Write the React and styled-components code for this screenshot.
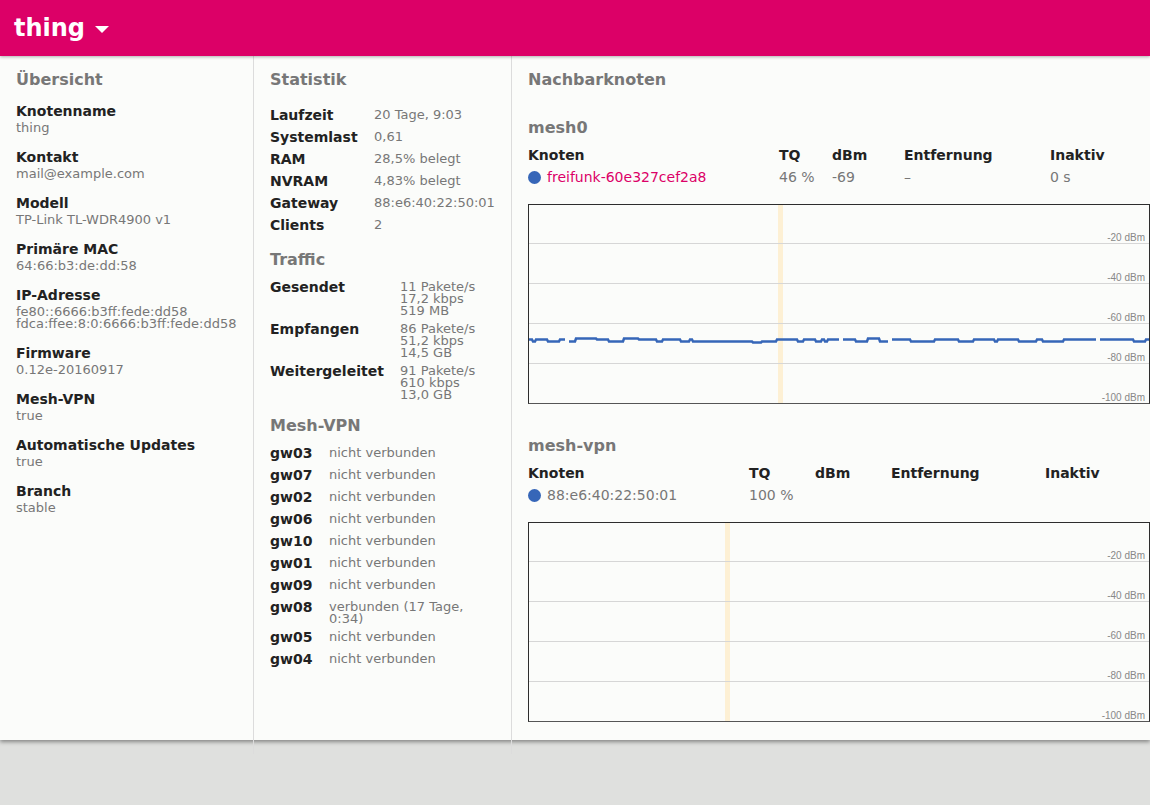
import React from 'react';
import styled, { createGlobalStyle } from 'styled-components';

const GlobalStyle = createGlobalStyle`
  html, body {
    margin: 0;
    padding: 0;
    background: #dfe0de;
    font-family: "DejaVu Sans", "Noto Sans", sans-serif;
  }
`;

const Page = styled.div`
  width: 1150px;
  min-height: 805px;
`;

const Header = styled.header`
  position: relative;
  z-index: 2;
  display: flex;
  align-items: center;
  height: 56px;
  padding: 0 14px;
  box-sizing: border-box;
  background: #dc0067;
  box-shadow: 0 1px 3px rgba(0, 0, 0, 0.3);
  color: #fff;
`;

const NodeName = styled.h1`
  margin: 0;
  font-size: 24px;
  font-weight: bold;
  line-height: 28px;
`;

const Caret = styled.span`
  width: 0;
  height: 0;
  margin-left: 10px;
  margin-top: 2px;
  border-left: 7px solid transparent;
  border-right: 7px solid transparent;
  border-top: 7px solid #fff;
`;

const Main = styled.main`
  display: grid;
  grid-template-columns: 254px 258px 1fr;
  height: 684px;
  background: #fbfcfa;
  box-shadow: 0 2px 4px rgba(0, 0, 0, 0.4);
`;

const Column = styled.section`
  padding: 14px ${p => (p.$flush ? '0' : '16px')} 0 16px;
  border-right: ${p => (p.$last ? 'none' : '1px solid #dcdcdc')};
  min-width: 0;
`;

const H2 = styled.h2`
  margin: 0 0 15px;
  font-size: 16px;
  line-height: 19px;
  color: #777;
`;

const H3 = styled.h3`
  margin: 14px 0 7px;
  font-size: 16px;
  line-height: 19px;
  color: #777;
`;

const Item = styled.div`
  margin-top: ${p => (p.$first ? '-2px' : '0')};
  margin-bottom: 14px;
`;

const Label = styled.div`
  font-size: 14px;
  font-weight: bold;
  line-height: 18px;
  color: #222;
`;

const Value = styled.div`
  margin-top: 2px;
  font-size: 13px;
  line-height: 12px;
  color: #777;
`;

const Table = styled.div`
  display: grid;
  grid-template-columns: ${p => p.$cols};
`;

const Cell = styled.div`
  padding: 2px 0;
  font-size: 14px;
  font-weight: bold;
  line-height: 18px;
  color: #222;
`;

const CellValue = styled.div`
  padding: 5px 0 2px;
  margin-bottom: -1px;
  font-size: 13px;
  line-height: 12px;
  color: #777;
  white-space: pre-line;
`;

const Section = styled.div`
  margin-top: ${p => (p.$first ? '29px' : '0')};
`;

const NeighbourName = styled.div`
  display: flex;
  align-items: center;
  gap: 6px;
  padding: 2px 0;
  font-size: 14px;
  line-height: 18px;
  color: ${p => (p.$link ? '#dc0067' : '#777')};
`;

const Dot = styled.span`
  width: 13px;
  height: 13px;
  border-radius: 50%;
  background: #3666b8;
`;

const NeighbourValue = styled.div`
  padding: 2px 0;
  font-size: 14px;
  line-height: 18px;
  color: #777;
`;

const ChartBox = styled.div`
  margin: 16px 0 32px;
  height: 198px;
  border: 1px solid #2d2d2d;
  border-bottom-color: #555;
  svg {
    display: block;
  }
`;

const overview = [
  ['Knotenname', ['thing']],
  ['Kontakt', ['mail@example.com']],
  ['Modell', ['TP-Link TL-WDR4900 v1']],
  ['Primäre MAC', ['64:66:b3:de:dd:58']],
  ['IP-Adresse', ['fe80::6666:b3ff:fede:dd58', 'fdca:ffee:8:0:6666:b3ff:fede:dd58']],
  ['Firmware', ['0.12e-20160917']],
  ['Mesh-VPN', ['true']],
  ['Automatische Updates', ['true']],
  ['Branch', ['stable']],
];

const stats = [
  ['Laufzeit', '20 Tage, 9:03'],
  ['Systemlast', '0,61'],
  ['RAM', '28,5% belegt'],
  ['NVRAM', '4,83% belegt'],
  ['Gateway', '88:e6:40:22:50:01'],
  ['Clients', '2'],
];

const traffic = [
  ['Gesendet', '11 Pakete/s\n17,2 kbps\n519 MB'],
  ['Empfangen', '86 Pakete/s\n51,2 kbps\n14,5 GB'],
  ['Weitergeleitet', '91 Pakete/s\n610 kbps\n13,0 GB'],
];

const vpn = [
  ['gw03', 'nicht verbunden'],
  ['gw07', 'nicht verbunden'],
  ['gw02', 'nicht verbunden'],
  ['gw06', 'nicht verbunden'],
  ['gw10', 'nicht verbunden'],
  ['gw01', 'nicht verbunden'],
  ['gw09', 'nicht verbunden'],
  ['gw08', 'verbunden (17 Tage,\n0:34)'],
  ['gw05', 'nicht verbunden'],
  ['gw04', 'nicht verbunden'],
];

const CHART_W = 620;
const y = dbm => -1.5 + -dbm * 2;

// step-like signal trace, small jitter around -69 dBm, a few missing samples
const signalPath = seed => {
  let s = seed;
  const rnd = () => (s = (s * 16807) % 2147483647) / 2147483647;
  let d = '';
  let x = 0;
  let open = false;
  while (x < CHART_W) {
    const len = 3 * (1 + Math.floor(rnd() * 5));
    const r = rnd();
    let off = 0;
    if (r < 0.35) off = 2;
    else if (r < 0.42) off = 3;
    else if (r > 0.9) off = -1;
    if (rnd() < 0.05) {
      open = false;
      x += 4;
      continue;
    }
    const end = Math.min(x + len, CHART_W);
    const py = y(-69) - 2 + off;
    d += open ? `L${x + 1} ${py}` : `M${x} ${py}`;
    d += `H${end}`;
    open = true;
    x = end;
  }
  return d;
};

const Chart = ({ marker, signal }) => (
  <ChartBox>
    <svg width="100%" height="198">
      <rect x={marker} y="0" width="5" height="198" fill="#fdf0d4" />
      {[-20, -40, -60, -80, -100].map(v => (
        <g key={v}>
          {v !== -100 && (
            <line x1="0" x2="100%" y1={y(v)} y2={y(v)} stroke="#d6d6d6" strokeWidth="1" />
          )}
          <text
            x="100%"
            dx="-4"
            y={y(v) - 3}
            textAnchor="end"
            fontSize="10"
            fontFamily="'Liberation Sans', Arial, sans-serif"
            fill="#888"
          >
            {v} dBm
          </text>
        </g>
      ))}
      {signal && (
        <path d={signalPath(signal)} fill="none" stroke="#3666b8" strokeWidth="2.5" />
      )}
    </svg>
  </ChartBox>
);

const NeighbourTable = ({ cols, name, link, tq, dbm, distance, inactive }) => (
  <Table $cols={cols}>
    <Cell>Knoten</Cell>
    <Cell>TQ</Cell>
    <Cell>dBm</Cell>
    <Cell>Entfernung</Cell>
    <Cell>Inaktiv</Cell>
    <NeighbourName $link={link}>
      <Dot />
      {name}
    </NeighbourName>
    <NeighbourValue>{tq}</NeighbourValue>
    <NeighbourValue>{dbm}</NeighbourValue>
    <NeighbourValue>{distance}</NeighbourValue>
    <NeighbourValue>{inactive}</NeighbourValue>
  </Table>
);

const App = () => (
  <Page>
    <GlobalStyle />
    <Header>
      <NodeName>thing</NodeName>
      <Caret />
    </Header>
    <Main>
      <Column>
        <H2>Übersicht</H2>
        {overview.map(([label, values], i) => (
          <Item key={label} $first={i === 0}>
            <Label>{label}</Label>
            <Value>
              {values.map(v => (
                <div key={v}>{v}</div>
              ))}
            </Value>
          </Item>
        ))}
      </Column>

      <Column>
        <H2>Statistik</H2>
        <Table $cols="104px 1fr">
          {stats.map(([k, v]) => (
            <React.Fragment key={k}>
              <Cell>{k}</Cell>
              <CellValue>{v}</CellValue>
            </React.Fragment>
          ))}
        </Table>
        <H3>Traffic</H3>
        <Table $cols="130px 1fr">
          {traffic.map(([k, v]) => (
            <React.Fragment key={k}>
              <Cell>{k}</Cell>
              <CellValue>{v}</CellValue>
            </React.Fragment>
          ))}
        </Table>
        <H3>Mesh-VPN</H3>
        <Table $cols="59px 1fr">
          {vpn.map(([k, v]) => (
            <React.Fragment key={k}>
              <Cell>{k}</Cell>
              <CellValue>{v}</CellValue>
            </React.Fragment>
          ))}
        </Table>
      </Column>

      <Column $last $flush>
        <H2>Nachbarknoten</H2>
        <Section $first>
          <H3>mesh0</H3>
          <NeighbourTable
            cols="251px 53px 72px 146px 1fr"
            name="freifunk-60e327cef2a8"
            link
            tq="46 %"
            dbm="-69"
            distance="–"
            inactive="0 s"
          />
          <Chart marker={249} signal={12345} />
        </Section>
        <Section>
          <H3>mesh-vpn</H3>
          <NeighbourTable
            cols="221px 66px 76px 154px 1fr"
            name="88:e6:40:22:50:01"
            tq="100 %"
            dbm=""
            distance=""
            inactive=""
          />
          <Chart marker={196} />
        </Section>
      </Column>
    </Main>
  </Page>
);

export default App;
